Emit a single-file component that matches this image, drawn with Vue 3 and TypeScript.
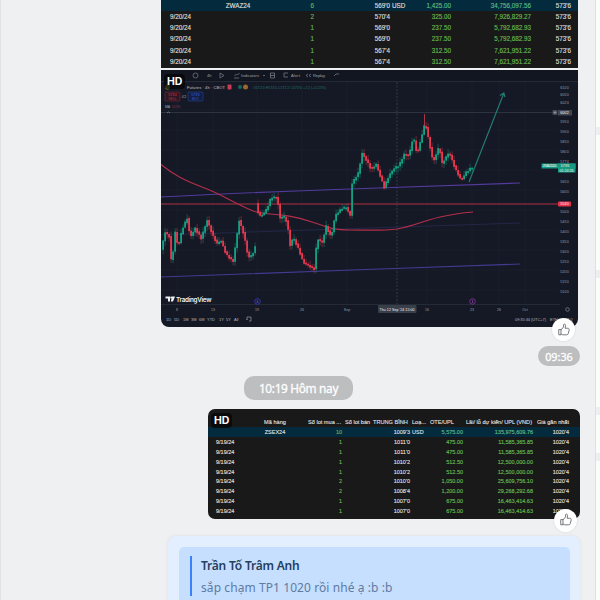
<script setup lang="ts">
import { computed } from 'vue'

type Row = [string, string, string, string, string, string, string, string]

const wheatRows: Row[] = [
  ['', 'ZWAZ24', '6', "569'0", 'USD', '1,425.00', '34,756,097.56', "573'6"],
  ['9/20/24', '', '2', "570'4", '', '325.00', '7,926,829.27', "573'6"],
  ['9/20/24', '', '1', "569'0", '', '237.50', '5,792,682.93', "573'6"],
  ['9/20/24', '', '1', "569'0", '', '237.50', '5,792,682.93', "573'6"],
  ['9/20/24', '', '1', "567'4", '', '312.50', '7,621,951.22', "573'6"],
  ['9/20/24', '', '1', "567'4", '', '312.50', '7,621,951.22', "573'6"],
]

const soyRows: Row[] = [
  ['', 'ZSEX24', '10', "1009'3", 'USD', '5,575.00', '135,975,609.76', "1020'4"],
  ['9/19/24', '', '1', "1011'0", '', '475.00', '11,585,365.85', "1020'4"],
  ['9/19/24', '', '1', "1011'0", '', '475.00', '11,585,365.85', "1020'4"],
  ['9/19/24', '', '1', "1010'2", '', '512.50', '12,500,000.00', "1020'4"],
  ['9/19/24', '', '1', "1010'2", '', '512.50', '12,500,000.00', "1020'4"],
  ['9/19/24', '', '2', "1010'0", '', '1,050.00', '25,609,756.10', "1020'4"],
  ['9/19/24', '', '2', "1008'4", '', '1,200.00', '29,268,292.68', "1020'4"],
  ['9/19/24', '', '1', "1007'0", '', '675.00', '16,463,414.63', "1020'4"],
  ['9/19/24', '', '1', "1007'0", '', '675.00', '16,463,414.63', "1020'4"],
]

// turning points of the price, split at the weekend gap
const swings: number[][][] = [
  [[162, 249], [166, 232], [170, 236], [172.5, 265], [176, 232], [179, 247], [183, 229], [188, 218], [191, 237], [196, 228], [202, 238], [208, 220], [214, 236], [219, 245], [221, 238], [227, 254], [234, 261], [240, 220], [245, 235], [249, 257], [253, 255], [256, 247]],
  [[257, 203], [260, 216], [264, 214], [268, 208], [272, 197], [278, 197], [281, 218], [284, 215], [288, 222], [291, 245], [294, 237], [300, 250], [304, 262], [309, 265], [316, 269], [317.5, 238], [323, 242], [327, 226], [332, 237], [336, 215], [343, 208], [347, 207], [352, 217], [353, 183], [359, 173], [363, 153], [368, 161], [372, 169], [377, 164], [385, 187], [390, 175], [395, 168], [400, 165], [405, 154], [410, 155], [414, 136], [418, 154], [426, 122], [434, 162], [440, 146], [443, 163], [450, 152], [456, 168], [462, 180], [467, 172], [473, 167]],
]

const priceAt = (points: number[][], x: number) => {
  for (let i = 1; i < points.length; i++) {
    const [x0, y0] = points[i - 1]
    const [x1, y1] = points[i]
    if (x <= x1) return y0 + ((y1 - y0) * (x - x0)) / (x1 - x0)
  }
  return points[points.length - 1][1]
}

const candles = computed(() => {
  const list: { x: number, top: number, height: number, high: number, low: number, color: string }[] = []
  let n = 0
  for (const points of swings) {
    const end = points[points.length - 1][0]
    for (let x = points[0][0]; x < end - 1; x += 2) {
      const open = priceAt(points, x)
      const close = priceAt(points, x + 2) + Math.sin(n * 2.7) * 0.8
      const top = Math.min(open, close)
      const height = Math.max(1.8, Math.abs(open - close) + 0.8)
      list.push({
        x: x + 0.2,
        top,
        height,
        high: top - 0.5 - Math.abs(Math.sin(n * 5.1)) * 4,
        low: top + height + 0.5 + Math.abs(Math.cos(n * 3.3)) * 4,
        color: close < open ? '#15a083' : '#e53950',
      })
      n++
    }
  }
  return list
})

const prices = ['610\'0', '605\'0', '602\'4', '', '595\'0', '590\'0', '585\'0', '580\'0', '577\'4', '', '565\'0', '560\'0', '', '550\'0', '545\'0', '540\'0', '535\'0', '530\'0', '525\'0', '520\'0', '515\'0', '510\'0']
const priceY = (i: number) => (i < 3 ? [88.5, 95.5, 104][i] : 113.5 + (i - 3) * 9.95)

const dates = [
  [177, '8'], [213, '13'], [257, '19'], [302, '26'], [347, 'Sep'], [427, '16'], [472, '23'], [499, '26'], [525, 'Oct'],
]

const ranges = [[166, '1D'], [174, '5D'], [183, '1M'], [191, '3M'], [199, '6M'], [207, 'YTD'], [219, '1Y'], [226, '5Y'], [234, 'All']]
</script>

<template>
  <div class="screen">
    <main class="chat">
      <section class="sheet wheat">
        <div v-for="(row, i) in wheatRows" :key="i" class="row" :class="{ total: i === 0 }">
          <span v-for="(cell, c) in row" :key="c" :class="'c' + c">{{ cell }}</span>
        </div>
      </section>

      <section class="photo">
        <svg class="chart" viewBox="161 70 417 257">
          <rect x="161" y="70" width="417" height="257" fill="#151925" />
          <rect x="161" y="70" width="417" height="11" fill="#121620" />
          <path d="M161 81.5H578M161 304.5H560" stroke="#252a37" stroke-width="1" />
          <g stroke="#1a1f2b" stroke-width=".7">
            <path v-for="x in [177, 213, 257, 302, 347, 427, 472, 499, 525]" :key="x" :d="`M${x} 82V304`" />
            <path v-for="i in 10" :key="i" :d="`M161 ${90 + i * 20}H556`" />
          </g>
          <path d="M161 112.5H556" stroke="#343a47" stroke-width=".8" />
          <path d="M397 82V304" stroke="#3d4351" stroke-width=".8" stroke-dasharray="2 1.5" />

          <g fill="none" stroke="#9196a1" stroke-width=".8" opacity=".75">
            <circle cx="195.5" cy="75.5" r="2.5" />
            <path d="M220 73v5M220 73l4 2.5l-4 2.5M234 78h5M234.5 76l2-2l1 1l2-2M270.5 73h4v5h-4zM270.5 75.5h4M284 73h4M284 73v4h4M308 74l-2 1.5l2 1.5M311 74l-2 1.5l2 1.5M334 76l2-2h3M263 75l1 1l1-1" />
          </g>
          <g class="tool">
            <text x="207" y="77.2">4h</text>
            <text x="241" y="77.2" textLength="18">Indicators</text>
            <text x="291" y="77.2" textLength="9">Alert</text>
            <text x="313" y="77.2" textLength="12">Replay</text>
          </g>
          <circle cx="167.5" cy="87" r="2.5" fill="#a2912e" />
          <text class="tool bright" x="187" y="88.5" textLength="38">Futures · 4h · CBOT</text>
          <rect x="227.5" y="84.5" width="4" height="5" rx="1" fill="#c83b54" />
          <circle cx="240" cy="87" r="2" fill="#176856" />
          <circle cx="245.5" cy="87" r="2.5" fill="#9a662c" />
          <text class="ohlc" x="253" y="88.5" textLength="73">O572'4 H574'0 L571'2 C573'6 +1'2 (+0.22%)</text>
          <g class="quote">
            <rect x="165" y="92" width="15" height="9" rx="1" fill="#2a1722" stroke="#7c2638" stroke-width=".6" />
            <text x="172.5" y="96" fill="#e3334d">573'4</text>
            <text x="172.5" y="100" fill="#b82d41">SELL</text>
            <rect x="188" y="92" width="15" height="9" rx="1" fill="#131e42" stroke="#254590" stroke-width=".6" />
            <text x="195.5" y="96" fill="#345ff0">573'6</text>
            <text x="195.5" y="100" fill="#3156c1">BUY</text>
            <text x="184" y="98" fill="#a1a5b0">0'2</text>
            <text x="167.5" y="107.5" fill="#a1a5b0">MA</text>
            <text x="176" y="107.5" fill="#8c2e42">553'6</text>
          </g>
          <path d="M167 113l1.5-1l1.5 1" fill="none" stroke="#8a8e98" stroke-width=".7" />

          <path d="M161 197Q260 192 350 189T520 183" fill="none" stroke="#523b9c" stroke-width="1.1" />
          <path d="M161 235L520 223" stroke="#272b50" stroke-width=".8" />
          <path d="M161 277L380 269L520 264" fill="none" stroke="#433a91" stroke-width="1.1" />
          <path d="M161 204H560" stroke="#af3047" stroke-width="1.1" />
          <path d="M161 164.5C175 176 186 181 202 187S224 197 238 204S256 213 270 214S294 216 312 222S334 230 350 230S382 231 397 229C415 226 427 219 445 216S460 213 473 212" fill="none" stroke="#b42f4b" stroke-width="1.15" />

          <g v-for="(c, i) in candles" :key="i">
            <path :d="`M${c.x + 0.9} ${c.high}V${c.low}`" :stroke="c.color" stroke-width=".6" opacity=".7" />
            <rect :x="c.x" :y="c.top" width="1.8" :height="c.height" :fill="c.color" />
          </g>
          <path d="M424.5 114V126" stroke="#d23b50" stroke-width=".8" />
          <path d="M469 182L503.5 94M500 95.5L503.8 93L505 97" fill="none" stroke="#247970" stroke-width="1.2" />

          <g class="axis">
            <text v-for="(price, i) in prices" :key="i" x="564.5" :y="priceY(i)">{{ price }}</text>
            <text v-for="d in dates" :key="d[0]" :x="d[0]" y="311">{{ d[1] }}</text>
            <rect x="558" y="110" width="14" height="5.5" fill="#424753" />
            <text class="white" x="564.5" y="114.3">600'2</text>
            <rect x="552.5" y="110" width="5" height="5" rx="1" fill="#454a55" />
            <path d="M555 111v3M553.5 112.5h3" stroke="#bec1c6" stroke-width=".5" />
            <rect x="541.5" y="163.5" width="34" height="5" fill="#179a83" />
            <rect x="558" y="163.5" width="17.5" height="9" fill="#179a83" />
            <text class="white" x="549.5" y="167.3" textLength="14">ZWAZ2024</text>
            <text class="white" x="565" y="167.3">573'6</text>
            <text class="white" x="566.5" y="171.5">01:24:26</text>
            <rect x="558" y="201.5" width="13" height="5" rx="1" fill="#e6304a" />
            <text class="white" x="564.5" y="205.3">554'0</text>
            <rect x="378" y="305" width="38.5" height="8" rx="1" fill="#393e4b" />
            <text class="white" x="397" y="311" textLength="35">Thu 12 Sep '24  15:00</text>
          </g>

          <g fill="none" stroke-width="1">
            <circle cx="257.5" cy="301.5" r="2.8" stroke="#3834aa" />
            <circle cx="472.5" cy="301.5" r="2.8" stroke="#71328a" />
            <path d="M256 302h3M257.5 300v3" stroke="#4541c4" stroke-width=".7" />
            <path d="M472.5 300v3" stroke="#8d3ea1" stroke-width=".8" />
            <circle cx="567.5" cy="309.5" r="1.8" stroke="#858994" stroke-width=".7" />
            <path d="M247 320v-3h4v4h-2M246.5 319l1 1" stroke="#969aa4" stroke-width=".7" />
          </g>
          <path d="M165.5 296.5h4.5v5h-2v-3h-2.5zM172 296.5h3l-2 5h-2.2z" fill="#f1f2f4" />
          <circle cx="171.2" cy="297.5" r="1" fill="#f1f2f4" />
          <text class="brand" x="176" y="301.8" textLength="35.5">TradingView</text>
          <g class="ranges">
            <text v-for="r in ranges" :key="r[1]" :x="r[0]" y="320.5">{{ r[1] }}</text>
            <text x="515" y="320.5" textLength="31">09:35:34 (UTC+7)</text>
            <text x="550" y="320.5">ETH</text>
            <text x="565" y="320.5">ADJ</text>
          </g>
        </svg>
        <span class="hd">HD</span>
        <span class="like">
          <svg viewBox="0 0 16 16"><path d="M2 7.5h2.5v6H2zM4.5 8l3-3.5V2.300c0-1.700 2.300-1.500 2.300.8L9.300 6h3c1.300 0 1.900.8 1.600 2l-1 4c-.2 1-.9 1.500-1.900 1.500H6.500l-2-1" /></svg>
        </span>
      </section>

      <span class="time">09:36</span>
      <span class="day">10:19 Hôm nay</span>

      <section class="sheet soy">
        <div class="row head">
          <span></span><span class="c1">Mã hàng</span><span class="h2">Số lot mua ...</span><span>Số lot bán</span>
          <span>TRUNG BÌNH</span><span>Loạ...</span><span>OTE/UPL</span><span>Lãi/ lỗ dự kiến/ UPL (VND)</span><span>Giá gần nhất</span>
        </div>
        <div v-for="(row, i) in soyRows" :key="i" class="row" :class="{ total: i === 0 }">
          <span v-for="(cell, c) in row" :key="c" :class="'c' + c">{{ cell }}</span>
        </div>
        <span class="hd">HD</span>
        <span class="like">
          <svg viewBox="0 0 16 16"><path d="M2 7.5h2.5v6H2zM4.5 8l3-3.5V2.300c0-1.700 2.300-1.500 2.300.8L9.300 6h3c1.300 0 1.900.8 1.600 2l-1 4c-.2 1-.9 1.500-1.900 1.500H6.500l-2-1" /></svg>
        </span>
      </section>

      <article class="bubble">
        <div class="reply">
          <div class="quoted">
            <strong>Trần Tố Trâm Anh</strong>
            <p>sắp chạm TP1 1020 rồi nhé ạ :b :b</p>
          </div>
        </div>
      </article>
    </main>
    <aside class="side"><i></i><i></i><i></i><i></i></aside>
  </div>
</template>

<style>
body {
  overflow: hidden;
}
</style>

<style scoped>
.screen {
  display: flex;
  width: 600px;
  height: 600px;
  overflow: hidden;
  background: #eff0f2;
  font-family: "Liberation Sans", Arial, sans-serif;
}

.chat {
  box-sizing: border-box;
  display: flex;
  flex-direction: column;
  align-items: flex-end;
  width: 596px;
  height: 600px;
  padding-right: 15px;
  border-left: 1px solid #dfe2e6;
  border-right: 1px solid #dcdfe3;
}

.chat > * {
  flex-shrink: 0;
}

.sheet {
  position: relative;
  box-sizing: border-box;
  background: #191919;
  color: #dedede;
  -webkit-text-stroke: 0.15px;
}

.row {
  display: grid;
  align-items: center;
  white-space: nowrap;
}

.total {
  background: #042b3d;
}

.wheat {
  width: 417px;
  height: 68px;
  margin-right: 2px;
  overflow: hidden;
  font-size: 6.3px;
}

.wheat .row {
  grid-template-columns: 52px 50px 54px 73px 22px 39px 80px 40px;
  height: 11.3px;
}

.wheat .total {
  height: 10.5px;
}

.c0 {
  padding-left: 9px;
}

.c1 {
  text-align: center;
}

.c2 {
  color: #65b252;
  text-align: right;
}

.wheat .c2 {
  padding-right: 3px;
}

.c3,
.c5,
.c6,
.c7 {
  text-align: right;
}

.c4 {
  padding-left: 2px;
}

.c5,
.c6 {
  color: #66b94f;
}

.total .c5,
.total .c6 {
  color: #5abb88;
}

.photo {
  position: relative;
  width: 417px;
  height: 257px;
  margin: 2px 2px 0 0;
}

.chart {
  display: block;
  width: 417px;
  height: 257px;
  border-radius: 0 0 8px 8px;
}

.tool {
  fill: #a0a4ae;
  font-size: 4px;
}

.bright {
  fill: #c3c6cd;
}

.ohlc {
  fill: #21756b;
  font-size: 3.5px;
}

.quote {
  font-size: 3.5px;
  text-anchor: middle;
}

.axis {
  fill: #9a9eaa;
  font-size: 3.6px;
  text-anchor: middle;
}

.white {
  fill: #f3f4f5;
}

.brand {
  fill: #f1f2f4;
  font-family: Inter, sans-serif;
  font-size: 6.3px;
  font-weight: 600;
}

.ranges {
  fill: #b2b5bd;
  font-size: 4px;
}

.hd {
  position: absolute;
  top: 4px;
  left: 3px;
  padding: 0 3px;
  border-radius: 4px;
  background: rgba(5, 6, 10, 0.75);
  color: #fff;
  font: 700 10.5px/15px Inter, sans-serif;
  -webkit-text-stroke: 0;
}

.like {
  position: absolute;
  right: 3px;
  bottom: -14px;
  display: flex;
  align-items: center;
  justify-content: center;
  width: 23px;
  height: 23px;
  border-radius: 50%;
  background: #fff;
  box-shadow: 0 0 2px rgba(0, 0, 0, 0.15);
}

.soy .like {
  bottom: -12.5px;
}

.like svg {
  width: 14px;
  height: 14px;
  fill: none;
  stroke: #62666b;
  stroke-width: 1;
  stroke-linejoin: round;
}

.time,
.day {
  border-radius: 10px;
  background: #bdbebf;
  color: #fff;
  text-align: center;
  font-family: "Noto Sans", sans-serif;
  -webkit-text-stroke: 0.3px #fff;
}

.time {
  width: 42px;
  height: 20px;
  margin-top: 19px;
  font-size: 10.8px;
  line-height: 21px;
}

.day {
  align-self: flex-start;
  width: 109px;
  height: 24px;
  margin: 10px 0 9px 243px;
  font-size: 11.8px;
  line-height: 24px;
  letter-spacing: -0.3px;
}

.soy {
  width: 372px;
  height: 110px;
  padding-top: 7px;
  border-radius: 7px;
  font-size: 5.5px;
}

.soy .row {
  grid-template-columns: 41px 52px 41px 68px 18px 35px 70px 36px;
  height: 9.9px;
}

.soy .c0 {
  padding-left: 8px;
}

.soy .head {
  grid-template-columns: 41px 52px 44px 28px 39px 18px 36px 71px 43px;
  height: 11px;
  font-size: 5.6px;
}

.h2 {
  padding-left: 7px;
}

.bubble {
  box-sizing: border-box;
  width: 412px;
  height: 90px;
  margin-top: 17px;
  padding: 11px 10px 0 11px;
  border-radius: 8px;
  background: #e3efff;
  box-shadow: 0 0 3px rgba(120, 135, 155, 0.18);
}

.reply {
  height: 80px;
  padding: 9px 0 0 11px;
  border-radius: 5px;
  background: #c6dfff;
}

.quoted {
  display: flex;
  flex-direction: column;
  height: 40px;
  padding-left: 9px;
  border-left: 2px solid #3b82f6;
  font-family: "Noto Sans", sans-serif;
  font-size: 12px;
  white-space: nowrap;
}

.quoted strong {
  color: #24405f;
  font-weight: 600;
  line-height: 20px;
  letter-spacing: -0.2px;
}

.quoted p {
  margin: 2px 0 0;
  color: #5f7b9f;
  line-height: 20px;
  letter-spacing: 0.08px;
}

.side {
  display: flex;
  flex-direction: column;
  width: 4px;
  padding-top: 127px;
  background: #fbfcfc;
}

.side i {
  height: 8px;
  margin-bottom: 135px;
  background: #eceef0;
}

.side i:nth-child(2) {
  margin-bottom: 129px;
}

.side i:nth-child(3) {
  margin-bottom: 38px;
}
</style>
